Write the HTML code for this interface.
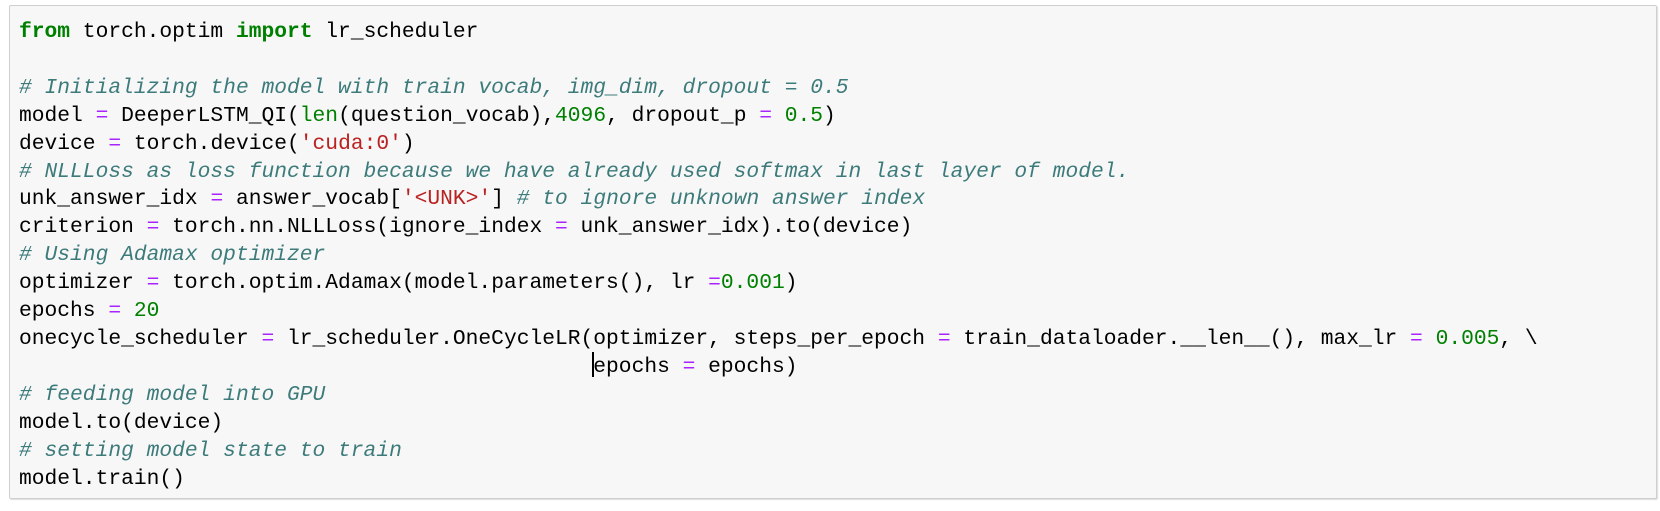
<!DOCTYPE html>
<html><head><meta charset="utf-8"><style>
body{margin:0;background:#fff;width:1660px;height:511px;overflow:hidden}
.box{position:absolute;left:9px;top:5px;width:1646px;height:492px;background:#f7f7f7;border:1px solid #cfcfcf;border-radius:2px;box-shadow:1px 1px 1px #ddd}
pre{position:absolute;left:19px;top:19px;margin:0;font-family:"Liberation Mono",monospace;font-size:21.27px;line-height:27.9px;color:#000;white-space:pre}
.k{color:#008000;font-weight:bold}.c{color:#3d7b7b;font-style:italic}.s{color:#BA2121}.n{color:#008000}.o{color:#AA22FF}.b{color:#008000}
.cur{position:relative;display:inline-block;width:0}
.cur:before{content:"";position:absolute;left:-1px;top:-20px;width:2px;height:25px;background:#000}
</style></head><body>
<div class="box"></div>
<pre><span class="k">from</span> torch.optim <span class="k">import</span> lr_scheduler

<span class="c"># Initializing the model with train vocab, img_dim, dropout = 0.5</span>
model <span class="o">=</span> DeeperLSTM_QI(<span class="b">len</span>(question_vocab),<span class="n">4096</span>, dropout_p <span class="o">=</span> <span class="n">0.5</span>)
device <span class="o">=</span> torch.device(<span class="s">'cuda:0'</span>)
<span class="c"># NLLLoss as loss function because we have already used softmax in last layer of model.</span>
unk_answer_idx <span class="o">=</span> answer_vocab[<span class="s">'&lt;UNK&gt;'</span>] <span class="c"># to ignore unknown answer index</span>
criterion <span class="o">=</span> torch.nn.NLLLoss(ignore_index <span class="o">=</span> unk_answer_idx).to(device)
<span class="c"># Using Adamax optimizer</span>
optimizer <span class="o">=</span> torch.optim.Adamax(model.parameters(), lr <span class="o">=</span><span class="n">0.001</span>)
epochs <span class="o">=</span> <span class="n">20</span>
onecycle_scheduler <span class="o">=</span> lr_scheduler.OneCycleLR(optimizer, steps_per_epoch <span class="o">=</span> train_dataloader.__len__(), max_lr <span class="o">=</span> <span class="n">0.005</span>, \
                                             <span class="cur"></span>epochs <span class="o">=</span> epochs)
<span class="c"># feeding model into GPU</span>
model.to(device)
<span class="c"># setting model state to train</span>
model.train()</pre>
</body></html>
